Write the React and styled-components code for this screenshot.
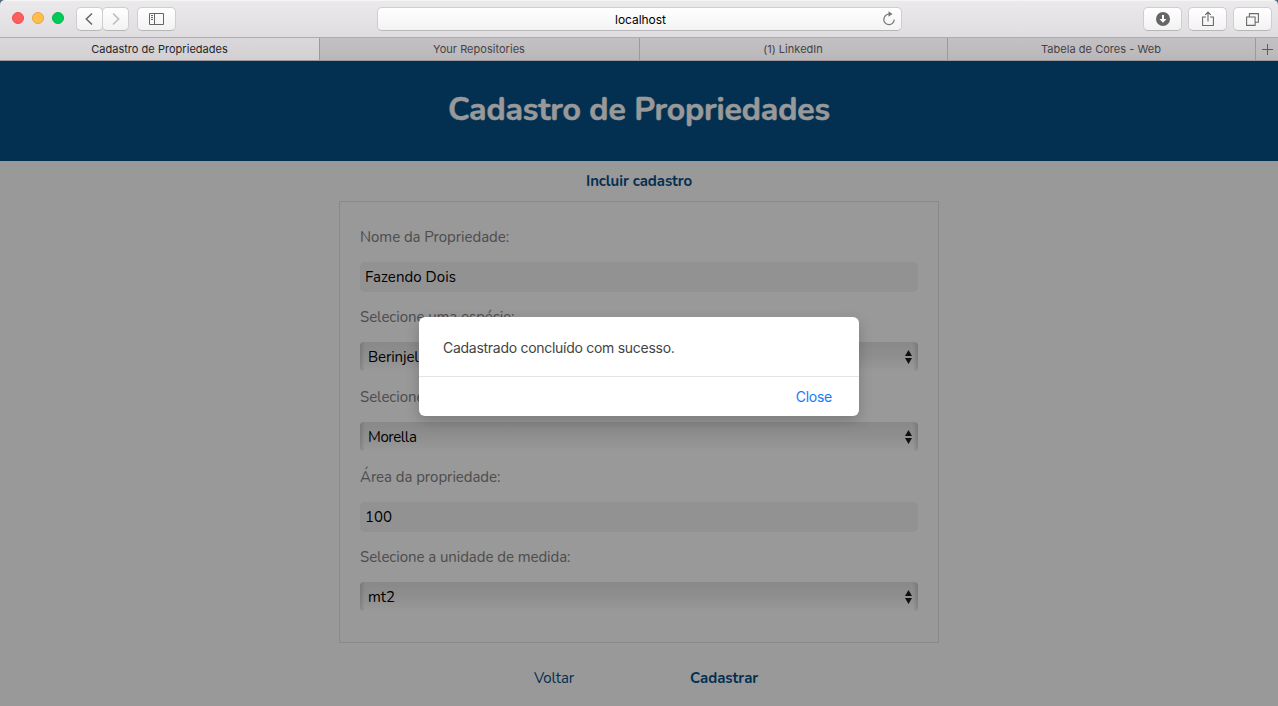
import React from "react";
import styled, { createGlobalStyle } from "styled-components";

const Global = createGlobalStyle`
  * { box-sizing: border-box; }
  body { margin: 0; background: #fff; overflow: hidden; }
`;

const system = `Inter, "Liberation Sans", sans-serif`;
const rounded = `Nunito, "Noto Sans", "Open Sans", sans-serif`;

const Window = styled.div`
  width: 1278px;
  height: 706px;
  display: flex;
  flex-direction: column;
  overflow: hidden;
  background: #52687c;
  font-family: ${system};
`;

const Toolbar = styled.div`
  height: 38px;
  flex: none;
  display: grid;
  grid-template-columns: 377px 525px 1fr;
  align-items: center;
  border-radius: 5px 5px 0 0;
  border-top: 1px solid #f6f5f6;
  border-bottom: 1px solid #aeacae;
  background: linear-gradient(#ebe9eb, #dfdddf);
`;

const ToolGroup = styled.div`
  display: flex;
  align-items: center;
  justify-content: ${(p) => (p.$end ? "flex-end" : "flex-start")};
  gap: ${(p) => (p.$end ? "6px" : "0")};
  padding: ${(p) => (p.$end ? "0 6px 0 0" : "0 0 0 12px")};
`;

const Lights = styled.div`
  display: flex;
  gap: 8px;
  margin: 0 12px 2px 0;
`;

const Light = styled.span`
  width: 12px;
  height: 12px;
  border-radius: 50%;
  background: ${(p) => p.$fill};
  border: 1px solid ${(p) => p.$edge};
`;

const ToolButton = styled.button`
  width: ${(p) => p.$width}px;
  height: 24px;
  padding: ${(p) => (p.$nudge ? "0 2px 0 0" : 0)};
  margin-left: ${(p) => p.$gap || 0}px;
  display: flex;
  align-items: center;
  justify-content: center;
  border: 1px solid #cfcdcf;
  border-bottom-color: #b8b6b8;
  border-radius: 5px;
  background: linear-gradient(#fff, #f3f2f3);
  svg { display: block; }
`;

const Address = styled.div`
  height: 24px;
  position: relative;
  display: flex;
  align-items: center;
  justify-content: center;
  border: 1px solid #cfcdcf;
  border-bottom-color: #b8b6b8;
  border-radius: 5px;
  background: linear-gradient(#fff, #f4f3f4);
  font-size: 12px;
  letter-spacing: -0.05px;
  color: #000;
  padding-left: 2px;
`;

const Reload = styled.span`
  position: absolute;
  right: 5px;
  top: 3px;
  svg { display: block; }
`;

const TabBar = styled.div`
  height: 23px;
  flex: none;
  display: grid;
  grid-template-columns: 320px 320px 308px 308px 22px;
  border-bottom: 1px solid #9b999b;
  background: linear-gradient(#c3c1c3, #b9b7b9);
`;

const Tab = styled.div`
  display: flex;
  align-items: center;
  justify-content: center;
  padding-right: ${(p) => (p.$active ? 0 : 1)}px;
  border-right: 1px solid #9c9a9c;
  font-size: 11px;
  letter-spacing: 0.03px;
  color: ${(p) => (p.$active ? "#262426" : "#454345")};
  background: ${(p) => (p.$active ? "linear-gradient(#dad8da, #d2d0d2)" : "none")};
`;

const NewTab = styled.div`
  display: flex;
  align-items: center;
  justify-content: center;
  svg { display: block; }
`;

const Page = styled.main`
  flex: 1;
  min-height: 0;
  position: relative;
  background: #fff;
  font-family: ${rounded};
`;

const Header = styled.header`
  height: 100px;
  display: flex;
  align-items: center;
  justify-content: center;
  padding-bottom: 2px;
  background: #055088;
`;

const Title = styled.h1`
  margin: 0;
  font-size: 32px;
  line-height: 44px;
  font-weight: 700;
  letter-spacing: -0.13px;
  -webkit-text-stroke: 0.5px #fff;
  color: #fff;
`;

const Subtitle = styled.div`
  height: 40px;
  display: flex;
  align-items: center;
  justify-content: center;
  font-size: 15px;
  font-weight: 700;
  letter-spacing: -0.07px;
  color: #055088;
`;

const Form = styled.section`
  width: 600px;
  height: 442px;
  margin: 0 auto;
  padding: 15px 20px 25px;
  border: 1px solid #e4e4e4;
`;

const Field = styled.div`
  height: 80px;
  display: flex;
  flex-direction: column;
`;

const Label = styled.label`
  height: 40px;
  margin-bottom: 5px;
  display: flex;
  align-items: center;
  font-size: 15px;
  letter-spacing: -0.05px;
  color: #808080;
`;

const Control = styled.div`
  display: flex;
  align-items: center;
  justify-content: space-between;
  height: 30px;
  border-radius: 5px;
  font-size: 15px;
  letter-spacing: ${(p) => p.$spacing || 0}px;
  color: #000;
`;

const Input = styled(Control)`
  padding: 0 5px;
  background: #f3f3f3;
`;

const Select = styled(Control)`
  height: 29px;
  padding: 0 6px 0 8px;
  border-radius: 4px;
  background:
    linear-gradient(90deg, rgba(0, 0, 0, 0.13), transparent 5px, transparent calc(100% - 5px), rgba(0, 0, 0, 0.13)),
    linear-gradient(#e4e4e4, #eeeeee 50%, #fff);
  svg { display: block; }
`;

const Actions = styled.div`
  height: 63px;
  display: flex;
  align-items: center;
  padding: 7px 0 0 534px;
  gap: 116px;
`;

const Action = styled.a`
  font-size: 15px;
  width: ${(p) => p.$width}px;
  white-space: nowrap;
  font-weight: ${(p) => (p.$strong ? 700 : 400)};
  letter-spacing: ${(p) => p.$spacing || 0}px;
  color: #055088;
`;

const Backdrop = styled.div`
  position: absolute;
  inset: 0;
  display: flex;
  align-items: center;
  justify-content: center;
  padding-bottom: 34px;
  background: rgba(0, 0, 0, 0.4);
`;

const Dialog = styled.div`
  width: 440px;
  height: 99px;
  border-radius: 6px;
  background: #fff;
  box-shadow: 0 5px 14px rgba(0, 0, 0, 0.2);
  font-family: ${system};
`;

const Message = styled.p`
  margin: 0;
  height: 60px;
  display: flex;
  align-items: center;
  padding: 1px 24px 0;
  border-bottom: 1px solid #e3e5e5;
  font-size: 14px;
  letter-spacing: -0.28px;
  color: #444;
`;

const DialogFooter = styled.div`
  height: 39px;
  display: flex;
  align-items: center;
  justify-content: flex-end;
  padding: 0 27px 1px 0;
`;

const CloseButton = styled.button`
  border: 0;
  padding: 0;
  background: none;
  font: 14px ${system};
  letter-spacing: -0.25px;
  color: #1479fb;
`;

const Chevron = ({ flip, color }) => (
  <svg width="8" height="14" viewBox="0 0 8 14" fill="none" stroke={color} strokeWidth="1.5">
    <path d={flip ? "M1 1.5 6.7 7 1 12.5" : "M7 1.5 1.3 7 7 12.5"} />
  </svg>
);

const SidebarIcon = () => (
  <svg width="15" height="12" viewBox="0 0 15 12" fill="none" stroke="#666" strokeWidth="1">
    <path d="M.5 .5h14v11H.5zM5.5 .5v11M2 2.5h2M2 4.5h2M2 6.5h2" />
  </svg>
);

const ReloadIcon = () => (
  <svg width="14" height="16" viewBox="0 0 14 16" fill="none" stroke="#777" strokeWidth="1.2">
    <path d="M7 3.2A5.2 5.2 0 1 0 12.2 8.4" />
    <path d="M6.5 .3 10.5 3.1 6.5 5.8z" fill="#777" stroke="none" />
  </svg>
);

const DownloadIcon = () => (
  <svg width="14" height="14" viewBox="0 0 14 14">
    <circle cx="7" cy="7" r="7" fill="#666" />
    <path d="M6 3h2v4h2.5L7 10.8 3.5 7H6z" fill="#fff" />
  </svg>
);

const ShareIcon = () => (
  <svg width="12" height="16" viewBox="0 0 12 16" fill="none" stroke="#6b6b6b" strokeWidth="1.1">
    <path d="M4 6H.6v8.5h10.8V6H8M6 10.5V1M3.2 3.8 6 1l2.8 2.8" />
  </svg>
);

const WindowsIcon = () => (
  <svg width="13" height="13" viewBox="0 0 13 13" fill="none" stroke="#6b6b6b" strokeWidth="1.1">
    <path d="M.6 4h8.5v8.4H.6zM3.4 4V.6h9v8.6H9.1" />
  </svg>
);

const PlusIcon = () => (
  <svg width="11" height="11" viewBox="0 0 11 11" stroke="#5c5c5c" strokeWidth="1">
    <path d="M5.5 0v11M0 5.5h11" />
  </svg>
);

const Arrows = () => (
  <svg width="7" height="14" viewBox="0 0 7 14" fill="#1c1c1c">
    <path d="M0 6 3.5 0 7 6zM0 8 3.5 14 7 8z" />
  </svg>
);

export default function App() {
  return (
    <Window>
      <Global />
      <Toolbar>
        <ToolGroup>
          <Lights>
            <Light $fill="#ff5c5c" $edge="#ee4f50" />
            <Light $fill="#ffbd4c" $edge="#eba53d" />
            <Light $fill="#00cb59" $edge="#00b84b" />
          </Lights>
          <ToolButton $width={27} $nudge><Chevron color="#666" /></ToolButton>
          <ToolButton $width={27} $gap={-1}><Chevron flip color="#bbb" /></ToolButton>
          <ToolButton $width={39} $gap={8}><SidebarIcon /></ToolButton>
        </ToolGroup>
        <Address>
          localhost
          <Reload><ReloadIcon /></Reload>
        </Address>
        <ToolGroup $end>
          <ToolButton $width={39}><DownloadIcon /></ToolButton>
          <ToolButton $width={39}><ShareIcon /></ToolButton>
          <ToolButton $width={39}><WindowsIcon /></ToolButton>
        </ToolGroup>
      </Toolbar>
      <TabBar>
        <Tab $active>Cadastro de Propriedades</Tab>
        <Tab>Your Repositories</Tab>
        <Tab>(1) LinkedIn</Tab>
        <Tab>Tabela de Cores - Web</Tab>
        <NewTab><PlusIcon /></NewTab>
      </TabBar>
      <Page>
        <Header><Title>Cadastro de Propriedades</Title></Header>
        <Subtitle>Incluir cadastro</Subtitle>
        <Form>
          <Field>
            <Label>Nome da Propriedade:</Label>
            <Input $spacing={0.06}>Fazendo Dois</Input>
          </Field>
          <Field>
            <Label>Selecione uma espécie:</Label>
            <Select $spacing={-0.1}>Berinjela<Arrows /></Select>
          </Field>
          <Field>
            <Label>Selecione uma variedade:</Label>
            <Select $spacing={-0.4}>Morella<Arrows /></Select>
          </Field>
          <Field>
            <Label>Área da propriedade:</Label>
            <Input>100</Input>
          </Field>
          <Field>
            <Label>Selecione a unidade de medida:</Label>
            <Select>mt2<Arrows /></Select>
          </Field>
        </Form>
        <Actions>
          <Action $width={40} $spacing={-0.1}>Voltar</Action>
          <Action $strong $width={68}>Cadastrar</Action>
        </Actions>
        <Backdrop>
          <Dialog>
            <Message>Cadastrado concluído com sucesso.</Message>
            <DialogFooter><CloseButton>Close</CloseButton></DialogFooter>
          </Dialog>
        </Backdrop>
      </Page>
    </Window>
  );
}
